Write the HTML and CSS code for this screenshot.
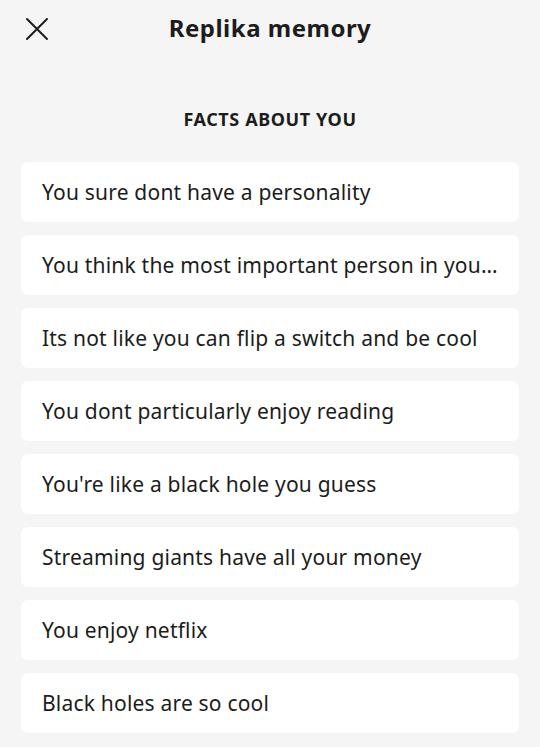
FILE: index.html
```html
<!DOCTYPE html>
<html lang="en">
<head>
	<meta charset="UTF-8">
	<title>Replika memory</title>
	<meta name="viewport" content="width=device-width, initial-scale=1.0">
	<link rel="stylesheet" href="styles.css">
</head>
<body>
	<header class="header">
		<button class="close" aria-label="Close">
			<svg viewBox="0 0 24 24" width="24" height="24">
				<path d="M2 2 L22 22 M22 2 L2 22" stroke="#1c1c1c" stroke-width="2" stroke-linecap="round" fill="none"/>
			</svg>
		</button>
		<h1 class="title">Replika memory</h1>
	</header>
	<main class="memory">
		<h2 class="section-title">FACTS ABOUT YOU</h2>
		<ul class="facts">
			<li class="fact">You sure dont have a personality</li>
			<li class="fact">You think the most important person in you…</li>
			<li class="fact">Its not like you can flip a switch and be cool</li>
			<li class="fact">You dont particularly enjoy reading</li>
			<li class="fact">You're like a black hole you guess</li>
			<li class="fact">Streaming giants have all your money</li>
			<li class="fact">You enjoy netflix</li>
			<li class="fact">Black holes are so cool</li>
		</ul>
	</main>
</body>
</html>
```

FILE: styles.css
```css
html{
	box-sizing: border-box;
	font-family: "Noto Sans", "Open Sans", sans-serif;
	font-size: 16px;
}
*,
*:before,
*:after{
	box-sizing: inherit;
}

body{
	margin: 0;
	min-height: 100vh;
	background-color: #f5f5f5;
	color: #1c1c1c;
}

.header{
	position: relative;
	height: 54px;
	display: flex;
	align-items: center;
	justify-content: center;
}
.close{
	position: absolute;
	left: 25px;
	top: 17px;
	padding: 0;
	border: 0;
	background: none;
	width: 24px;
	height: 24px;
}
.close svg{
	display: block;
}
.title{
	margin: 0;
	font-size: 24px;
	font-weight: 700;
	letter-spacing: .5px;
}

.memory{
	padding: 0 21px;
}
.section-title{
	margin: 51px 0 0;
	text-align: center;
	font-size: 18px;
	font-weight: 700;
	letter-spacing: .6px;
	line-height: 28px;
}
.facts{
	list-style: none;
	margin: 29px 0 0;
	padding: 0;
	display: flex;
	flex-direction: column;
	gap: 13px;
}
.fact{
	height: 60px;
	display: flex;
	align-items: center;
	padding: 0 25px 0 21px;
	background-color: #fff;
	border-radius: 7px;
	font-size: 21px;
	letter-spacing: .2px;
	white-space: nowrap;
	overflow: hidden;
	text-overflow: ellipsis;
}
```
